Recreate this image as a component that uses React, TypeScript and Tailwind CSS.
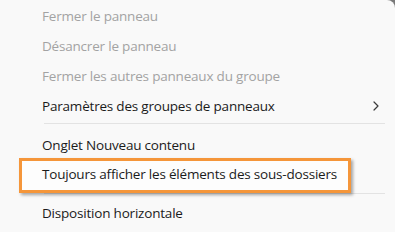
const DISABLED = ["Fermer le panneau", "Désancrer le panneau", "Fermer les autres panneaux du groupe"];

function Item({ label, disabled, h }: { label: string; disabled?: boolean; h: string }) {
  return (
    <div className={`flex items-center pl-[42px] ${h} ${disabled ? "text-[#a3a3a3]" : "text-[#1b1b1b]"}`}>
      {label}
    </div>
  );
}

function Separator({ className }: { className: string }) {
  return <div className={`ml-[44px] mr-[10px] h-px bg-[#e3e3e3] ${className}`} />;
}

export default function App() {
  return (
    <div className="w-[395px] h-[232px] overflow-hidden bg-[#7a7a7a]">
      <div
        className="relative h-full w-full rounded-tr-[8px] bg-[#f9f9f9] pt-[2px] text-[13.5px] leading-none tracking-[-0.2px]"
        style={{ fontFamily: '"Segoe UI", "Open Sans", "Noto Sans", sans-serif' }}
      >
        {DISABLED.map((label) => (
          <Item key={label} label={label} disabled h="h-[30px]" />
        ))}
        <div className="flex h-[29px] items-center justify-between pl-[42px] pr-[16px] text-[#1b1b1b]">
          <span>Paramètres des groupes de panneaux</span>
          <svg width="6" height="10" viewBox="0 0 6 10" fill="none" className="mt-[-2px]">
            <path d="M1 1 L5 5 L1 9" stroke="#3a3a3a" strokeWidth="1.2" strokeLinecap="round" strokeLinejoin="round" />
          </svg>
        </div>
        <Separator className="mt-[2px] mb-[7px]" />
        <Item label="Onglet Nouveau contenu" h="h-[30px]" />
        <div className="relative h-[28px]">
          <div className="absolute left-[19px] top-[-3px] h-[35px] w-[332px] border-[3px] border-[#f5963a] bg-[#fdfdfd] shadow-[2px_2px_3px_rgba(0,0,0,0.35)]" />
          <div className="relative flex h-full items-center pl-[42px] text-[#1b1b1b]">
            Toujours afficher les éléments des sous-dossiers
          </div>
        </div>
        <Separator className="mt-[4px] mb-[5px]" />
        <Item label="Disposition horizontale" h="h-[30px]" />
      </div>
    </div>
  );
}
